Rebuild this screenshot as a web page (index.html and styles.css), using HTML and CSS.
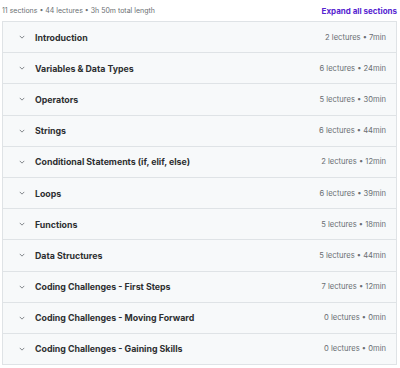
FILE: index.html
```html
<!DOCTYPE html>
<html lang="en">
<head>
    <meta charset="UTF-8">
    <title>Course content</title>
    <link rel="stylesheet" href="styles.css">
</head>
<body>
    <div class="summary">
        <span class="stats">11 sections • 44 lectures • 3h 50m total length</span>
        <a href="#" class="expand">Expand all sections</a>
    </div>

    <div class="sections">
        <div class="section"><span class="chev"><svg viewBox="0 0 8 5" width="6" height="4"><path d="M1 1l3 3 3-3" fill="none" stroke="#6a6f73" stroke-width="1.1"/></svg></span><span class="title">Introduction</span><span class="meta">2 lectures • 7min</span></div>
        <div class="section"><span class="chev"><svg viewBox="0 0 8 5" width="6" height="4"><path d="M1 1l3 3 3-3" fill="none" stroke="#6a6f73" stroke-width="1.1"/></svg></span><span class="title">Variables &amp; Data Types</span><span class="meta">6 lectures • 24min</span></div>
        <div class="section"><span class="chev"><svg viewBox="0 0 8 5" width="6" height="4"><path d="M1 1l3 3 3-3" fill="none" stroke="#6a6f73" stroke-width="1.1"/></svg></span><span class="title">Operators</span><span class="meta">5 lectures • 30min</span></div>
        <div class="section"><span class="chev"><svg viewBox="0 0 8 5" width="6" height="4"><path d="M1 1l3 3 3-3" fill="none" stroke="#6a6f73" stroke-width="1.1"/></svg></span><span class="title">Strings</span><span class="meta">6 lectures • 44min</span></div>
        <div class="section"><span class="chev"><svg viewBox="0 0 8 5" width="6" height="4"><path d="M1 1l3 3 3-3" fill="none" stroke="#6a6f73" stroke-width="1.1"/></svg></span><span class="title">Conditional Statements (if, elif, else)</span><span class="meta">2 lectures • 12min</span></div>
        <div class="section"><span class="chev"><svg viewBox="0 0 8 5" width="6" height="4"><path d="M1 1l3 3 3-3" fill="none" stroke="#6a6f73" stroke-width="1.1"/></svg></span><span class="title">Loops</span><span class="meta">6 lectures • 39min</span></div>
        <div class="section"><span class="chev"><svg viewBox="0 0 8 5" width="6" height="4"><path d="M1 1l3 3 3-3" fill="none" stroke="#6a6f73" stroke-width="1.1"/></svg></span><span class="title">Functions</span><span class="meta">5 lectures • 18min</span></div>
        <div class="section"><span class="chev"><svg viewBox="0 0 8 5" width="6" height="4"><path d="M1 1l3 3 3-3" fill="none" stroke="#6a6f73" stroke-width="1.1"/></svg></span><span class="title">Data Structures</span><span class="meta">5 lectures • 44min</span></div>
        <div class="section"><span class="chev"><svg viewBox="0 0 8 5" width="6" height="4"><path d="M1 1l3 3 3-3" fill="none" stroke="#6a6f73" stroke-width="1.1"/></svg></span><span class="title">Coding Challenges - First Steps</span><span class="meta">7 lectures • 12min</span></div>
        <div class="section"><span class="chev"><svg viewBox="0 0 8 5" width="6" height="4"><path d="M1 1l3 3 3-3" fill="none" stroke="#6a6f73" stroke-width="1.1"/></svg></span><span class="title">Coding Challenges - Moving Forward</span><span class="meta">0 lectures • 0min</span></div>
        <div class="section"><span class="chev"><svg viewBox="0 0 8 5" width="6" height="4"><path d="M1 1l3 3 3-3" fill="none" stroke="#6a6f73" stroke-width="1.1"/></svg></span><span class="title">Coding Challenges - Gaining Skills</span><span class="meta">0 lectures • 0min</span></div>
    </div>
</body>
</html>
```

FILE: styles.css
```css
body {
    margin: 0;
    padding: 0;
    background: #fff;
    font-family: Inter, "Liberation Sans", sans-serif;
    color: #2d2f31;
}
.summary {
    display: flex;
    justify-content: space-between;
    align-items: center;
    height: 21px;
    padding: 0 3px 0 2px;
}
.stats {
    font-size: 7px;
    color: #6a6f73;
}
.expand {
    font-size: 8px;
    font-weight: 700;
    color: #5624d0;
    text-decoration: none;
}
.sections {
    margin: 0 3px 0 2px;
    border: 1px solid #dfe3e6;
    border-bottom: none;
}
.section {
    display: flex;
    align-items: center;
    height: 30.2px;
    padding: 0 10px 0 16px;
    background: #f7f9fa;
    border-bottom: 1px solid #dfe3e6;
}
.chev {
    display: flex;
    width: 16px;
}
.title {
    flex: 1;
    font-size: 8.8px;
    font-weight: 700;
}
.meta {
    font-size: 7.6px;
    color: #6a6f73;
}
```
